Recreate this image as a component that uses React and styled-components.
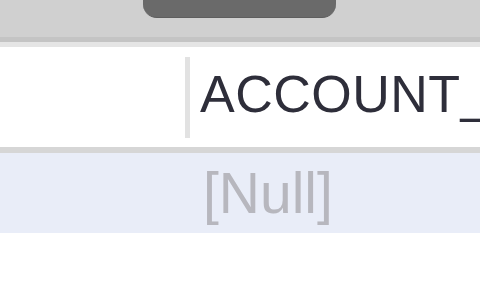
import React from 'react'
import styled, { createGlobalStyle } from 'styled-components'

const GlobalStyle = createGlobalStyle`
    html, body {
        margin: 0;
        padding: 0;
        background: #ffffff;
    }
    body {
        width: 480px;
        height: 300px;
        overflow: hidden;
        font-family: "Liberation Sans", Arial, sans-serif;
    }
`

const App = () => {
    return <Wrapper>
        <GlobalStyle/>
        <ScrollTrack>
            <Thumb/>
        </ScrollTrack>
        <HeaderRow>
            <Cell/>
            <Cell divided>
                <HeaderText>ACCOUNT_</HeaderText>
            </Cell>
        </HeaderRow>
        <DataRow>
            <Cell/>
            <Cell>
                <NullText>[Null]</NullText>
            </Cell>
        </DataRow>
    </Wrapper>
}

export default App;

const Wrapper = styled.div`
    width: 480px;
    height: 300px;
    overflow: hidden;
    display: flex;
    flex-direction: column;
`

const ScrollTrack = styled.div`
    height: 37px;
    background-color: #d0d0d0;
    border-bottom: 5px solid #c4c4c4;
    box-shadow: 0 5px 0 #e5e5e5;
    margin-bottom: 5px;
    padding-left: 143px;
    display: flex;
    flex-shrink: 0;
`

const Thumb = styled.div`
    width: 193px;
    height: 17px;
    background-color: #6a6a6a;
    border-bottom: 1px solid #5e5e5e;
    border-radius: 0 0 14px 14px;
`

const HeaderRow = styled.div`
    height: 100px;
    display: grid;
    grid-template-columns: 185px 1fr;
    border-bottom: 6px solid #d6d6d6;
    flex-shrink: 0;
`

const DataRow = styled.div`
    height: 80px;
    display: grid;
    grid-template-columns: 185px 1fr;
    background-color: #e9edf8;
    flex-shrink: 0;
`

const Cell = styled.div`
    position: relative;
    padding-left: 15px;
    white-space: nowrap;
    overflow: hidden;

    &::before {
        content: '';
        display: ${props => props.divided ? 'block' : 'none'};
        position: absolute;
        left: 0;
        top: 10px;
        width: 5px;
        height: 81px;
        background-color: #e2e2e2;
    }
`

const HeaderText = styled.div`
    font-size: 52px;
    line-height: 52px;
    letter-spacing: 0.5px;
    color: #2e2e3a;
    padding-top: 21px;
`

const NullText = styled.div`
    font-size: 57px;
    line-height: 57px;
    color: #b7b7be;
    padding-top: 12px;
    margin-left: 3px;
`
